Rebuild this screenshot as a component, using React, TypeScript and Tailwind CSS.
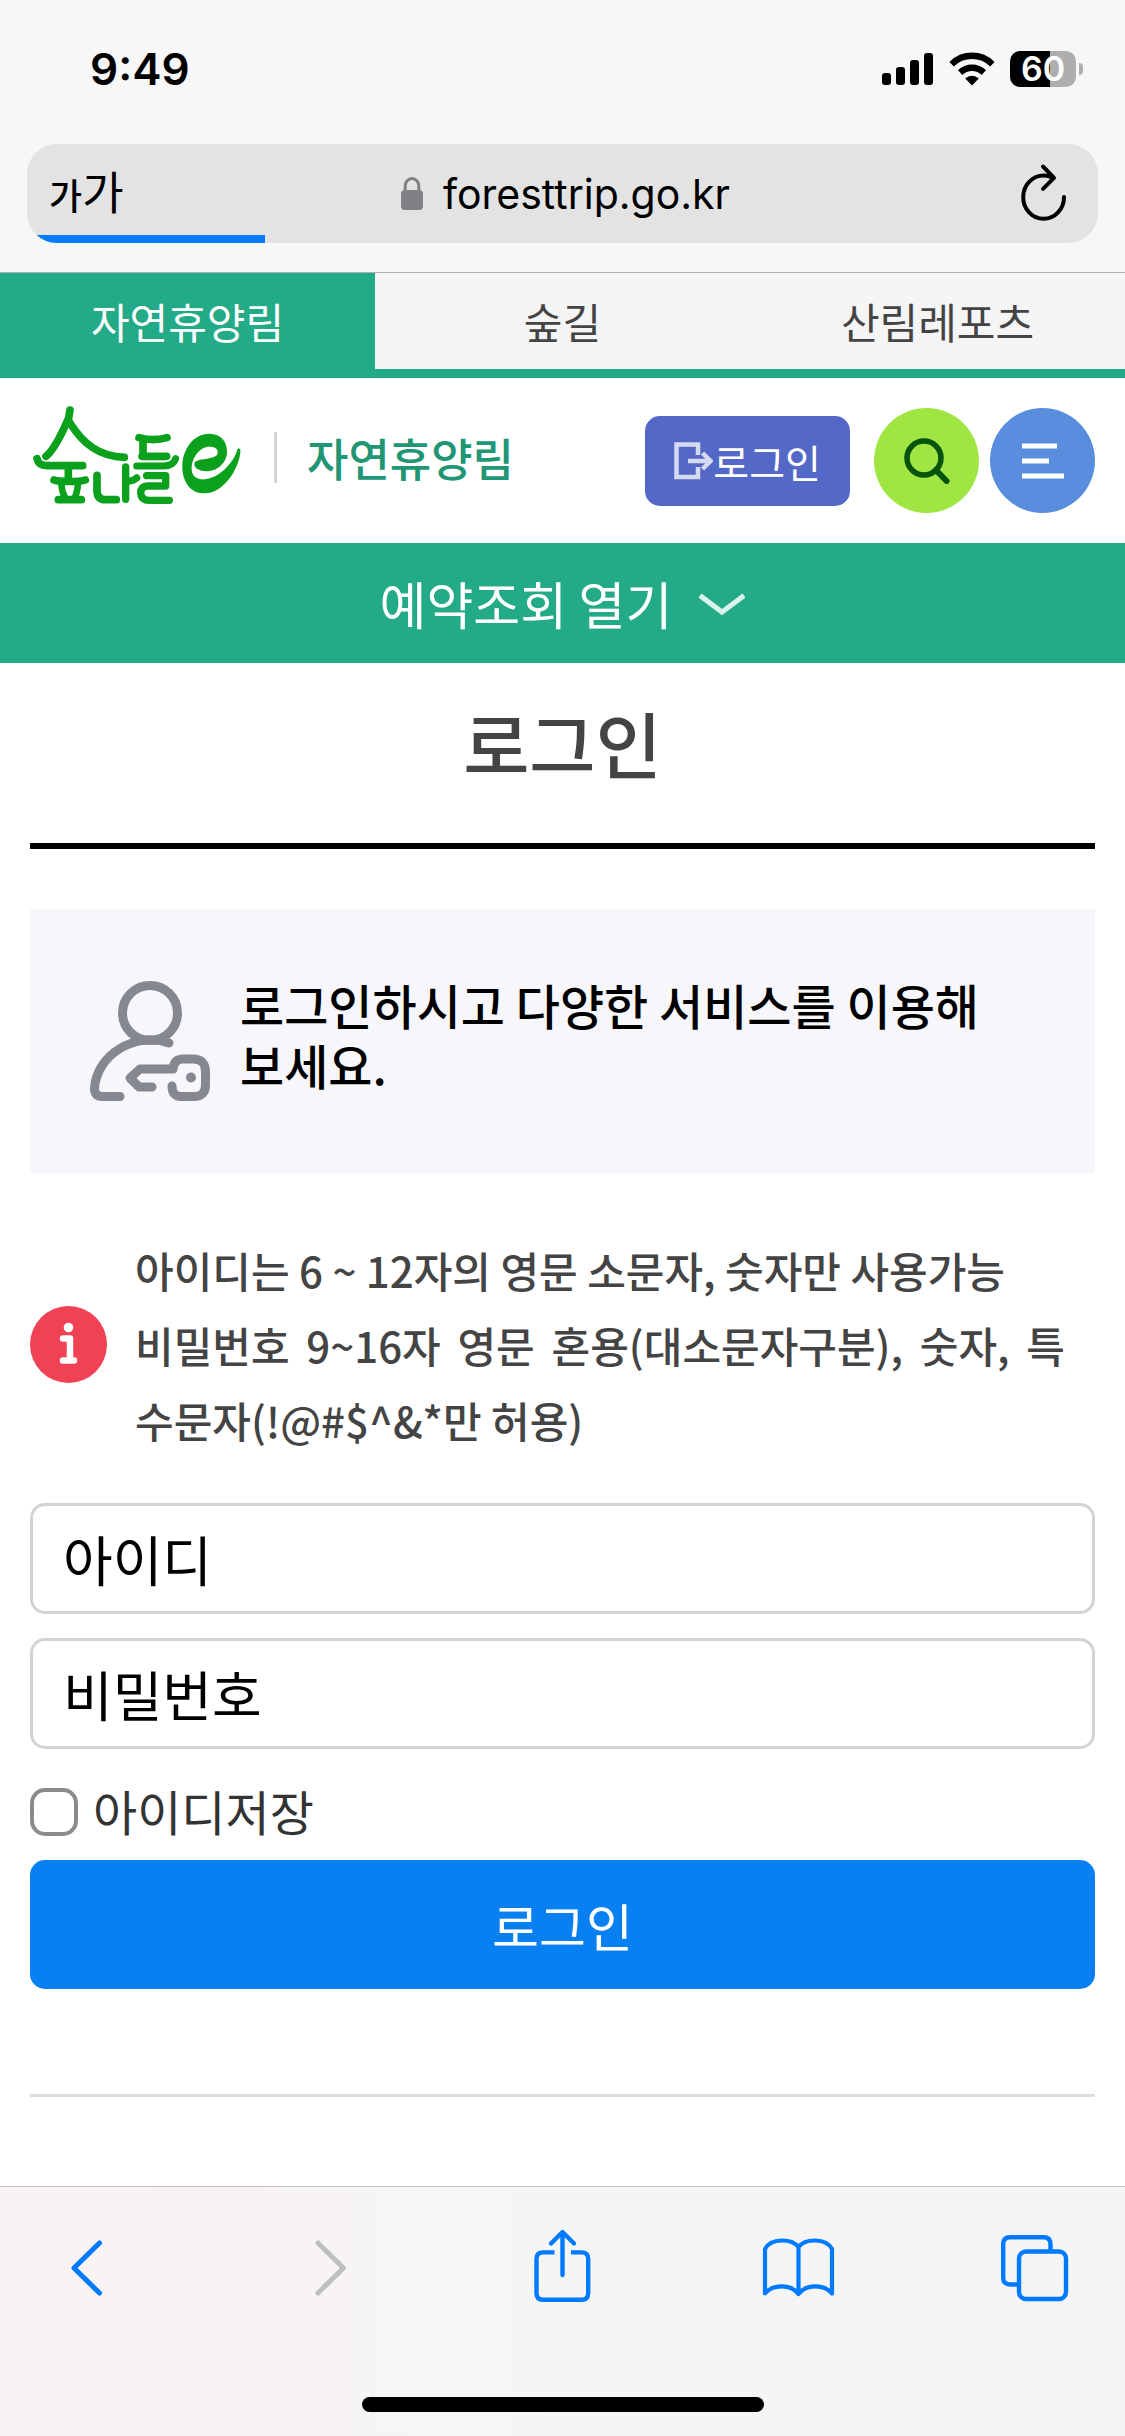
import React, { useState } from 'react';

const StatusBar: React.FC = () => (
    <div className="flex h-36 items-start justify-between pt-[42px] pl-[90px] pr-[42px]">
        <span className="text-[44px] leading-[54px] font-semibold text-black">9:49</span>
        <div className="flex h-[54px] items-center gap-[15px]">
            {/* Signal */}
            <svg width="52" height="34" viewBox="0 0 52 34" aria-hidden="true">
                <rect x="0" y="21" width="9" height="12" rx="3" />
                <rect x="14" y="15" width="9" height="18" rx="3" />
                <rect x="28" y="8" width="9" height="25" rx="3" />
                <rect x="42" y="1" width="9" height="32" rx="3" />
            </svg>
            {/* Wifi */}
            <svg width="46" height="34" viewBox="0 0 46 34" aria-hidden="true">
                <path d="M23 33.5 L16.2 26.6 A9.6 9.6 0 0 1 29.8 26.6 Z" />
                <path d="M11.2 20.6 A16.8 16.8 0 0 1 34.8 20.6" fill="none" stroke="#000" strokeWidth="6.4" />
                <path d="M2.6 12.2 A29 29 0 0 1 43.4 12.2" fill="none" stroke="#000" strokeWidth="6.4" />
            </svg>
            {/* Battery */}
            <div className="flex items-center gap-[3px]">
                <span className="flex h-9 w-[66px] items-center justify-center rounded-[10px] bg-linear-to-r from-black from-60% to-[#aeaeae] to-60% text-[34px] leading-9 font-semibold text-white">
                    60
                </span>
                <span className="h-3 w-1 rounded-r-full bg-[#aeaeae]" />
            </div>
        </div>
    </div>
);

const AddressBar: React.FC = () => (
    <div className="border-b border-[#b0b0b0] px-[27px] pb-[29px]">
        <div className="relative flex h-[99px] items-center overflow-hidden rounded-[30px] bg-[#e3e3e3]">
            <div className="flex flex-1 pr-[15px] pl-[22px]">
                <button type="button" className="flex items-baseline leading-none text-black">
                    <span className="text-[36px] font-medium">가</span>
                    <span className="text-[45px]">가</span>
                </button>
            </div>
            <button type="button" className="flex items-center gap-5 text-[41px] leading-[54px] text-black">
                <svg width="22" height="33" viewBox="0 0 22 33" aria-hidden="true">
                    <rect x="0" y="13" width="22" height="20" rx="4" fill="#808085" />
                    <path d="M4.2 15 V9 A6.8 7.4 0 0 1 17.8 9 V15" fill="none" stroke="#808085" strokeWidth="3" />
                </svg>
                foresttrip.go.kr
            </button>
            <div className="flex flex-1 justify-end pr-[31px]">
                <button type="button" aria-label="새로고침">
                    <svg width="46" height="62" viewBox="0 0 46 62" fill="none" stroke="#000" strokeWidth="4" strokeLinecap="round" strokeLinejoin="round" aria-hidden="true">
                        <path d="M31 14.5 C28 13.2 26 12.6 23 12.6 A20.4 21.6 0 1 0 43 34" />
                        <path d="M22 3.5 L33 14.8 L22 25.8" />
                    </svg>
                </button>
            </div>
            <div className="absolute bottom-0 left-0 h-2 w-[238px] bg-[#007aff]" />
        </div>
    </div>
);

const TABS = ['자연휴양림', '숲길', '산림레포츠'];

const SiteTabs: React.FC = () => {
    const [active, setActive] = useState(0);

    return (
        <nav className="grid grid-cols-3 border-b-9 border-[#23aa87] bg-[#f5f5f5]">
            {TABS.map((tab, i) => (
                <button
                    key={tab}
                    type="button"
                    onClick={() => setActive(i)}
                    className={
                        i === active
                            ? 'h-24 bg-[#23aa87] text-[42px] leading-[60px] text-white'
                            : 'h-24 text-[42px] leading-[60px] text-[#444]'
                    }
                >
                    {tab}
                </button>
            ))}
        </nav>
    );
};

const Logo: React.FC = () => (
    <svg width="208" height="106" viewBox="39 27 624 318" fill="none" stroke="#0ba11d" strokeWidth="23" strokeLinecap="round" strokeLinejoin="round" role="img" aria-label="숲나들e">
        <path d="M150 42 L146 66 C134 94 104 160 78 181" />
        <path d="M148 78 C190 146 240 182 313 184" />
        <path d="M51 188 Q56 209 80 209 H188" />
        <path d="M145 212 V246" />
        <path d="M102 252 C115 258 180 258 196 252" />
        <path d="M124 262 Q126 290 136 306 M174 262 Q172 290 164 306" strokeWidth="20" />
        <path d="M115 311 H184" />
        <path d="M231 238 V285 Q232 311 256 311 H289" />
        <path d="M317 213 V310 M322 256 Q342 254 350 246" strokeWidth="22" />
        <path d="M357 125 Q400 137 441 125 M369 132 V178 M366 181 H440" />
        <path d="M350 210 H430 Q460 210 467 188" strokeWidth="21" />
        <path d="M380 239 H437 V270 H382 Q362 271 362 292 Q364 313 388 313 H448" strokeWidth="22" />
        <path
            stroke="none"
            fill="#0ba11d"
            d="M661 160 C664 200 620 292 552 292 C510 292 487 255 487 212 C487 160 520 113 568 113 C605 113 621 138 621 167 C621 202 590 226 558 226 C540 226 523 217 523 205 C523 190 545 192 570 186 C588 182 595 176 593 166 C591 156 581 152 568 152 C540 152 514 185 515 220 C516 245 535 252 555 250 C600 246 645 195 652 160 C654 157 659 157 661 160 Z"
        />
    </svg>
);

const SiteHeader: React.FC = () => (
    <header className="flex h-[165px] items-center justify-between bg-white pr-[30px] pl-[33px]">
        <div className="flex items-center pb-1.5">
            <a href="#home">
                <Logo />
            </a>
            <span className="ml-[33px] h-[51px] w-[3px] bg-[#d4d4d4]" />
            <a href="#forest" className="ml-[30px] text-[45px] leading-[60px] font-medium text-[#219674]">
                자연휴양림
            </a>
        </div>
        <div className="flex items-center">
            <a href="#login" className="flex h-[90px] items-center rounded-[15px] bg-[#5468c7] px-[29px] text-[39px] leading-[54px] text-white">
                <svg width="39" height="38" viewBox="0 0 39 38" fill="none" stroke="#d6daf1" strokeWidth="4.5" aria-hidden="true">
                    <path d="M24 13 V2.5 H2.5 V35 H24 V25" />
                    <path d="M14 19 H36 M28.5 11 L36.5 19 L28.5 27" />
                </svg>
                로그인
            </a>
            <button type="button" aria-label="검색" className="ml-6 flex size-[105px] items-center justify-center rounded-full bg-[#a0e642]">
                <svg width="46" height="46" viewBox="0 0 46 46" fill="none" stroke="#07520d" aria-hidden="true">
                    <circle cx="20" cy="20" r="17" strokeWidth="5.5" />
                    <path d="M32 32 L42.5 43" strokeWidth="6" strokeLinecap="round" />
                </svg>
            </button>
            <button type="button" aria-label="메뉴" className="ml-[11px] flex size-[105px] items-center justify-center rounded-full bg-[#598ede]">
                <svg width="42" height="36" viewBox="0 0 42 36" fill="none" stroke="#fff" strokeWidth="5" aria-hidden="true">
                    <path d="M0 3 H35 M0 18 H27 M0 33 H42" />
                </svg>
            </button>
        </div>
    </header>
);

const LoginForm: React.FC = () => {
    const [userId, setUserId] = useState('');
    const [password, setPassword] = useState('');
    const [saveId, setSaveId] = useState(false);

    return (
        <form className="mt-[46px] flex flex-col" onSubmit={(e) => e.preventDefault()}>
            <input
                type="text"
                aria-label="아이디"
                placeholder="아이디"
                value={userId}
                onChange={(e) => setUserId(e.target.value)}
                className="h-[111px] rounded-[15px] border-3 border-[#d3d3d3] px-[30px] text-[54px] text-black placeholder:text-black"
            />
            <input
                type="password"
                aria-label="비밀번호"
                placeholder="비밀번호"
                value={password}
                onChange={(e) => setPassword(e.target.value)}
                className="mt-6 h-[111px] rounded-[15px] border-3 border-[#d3d3d3] px-[30px] text-[54px] text-black placeholder:text-black"
            />
            <div className="mt-[39px] flex h-12 items-center gap-[15px]">
                <input
                    id="save-id"
                    type="checkbox"
                    checked={saveId}
                    onChange={(e) => setSaveId(e.target.checked)}
                    className="size-12 appearance-none rounded-[15px] border-4 border-[#8a8a8f] bg-white checked:bg-[#0880f2]"
                />
                <label htmlFor="save-id" className="pb-1 text-[48px] leading-[48px] text-[#333]">
                    아이디저장
                </label>
            </div>
            <button type="submit" className="mt-6 h-[129px] rounded-[15px] bg-[#0880f2] text-[51px] leading-[60px] text-white">
                로그인
            </button>
        </form>
    );
};

const Toolbar: React.FC = () => (
    <footer className="mt-auto flex flex-col items-center border-t border-[#bebebe] bg-linear-to-r from-[#faf3f3] via-[#f6f5f5] to-[#f6f5f5] pb-6">
        <div className="flex w-full justify-between px-[42px] pt-[36px]">
            <button type="button" aria-label="뒤로">
                <svg width="90" height="90" viewBox="0 0 90 90" fill="none" stroke="#007aff" strokeWidth="5" strokeLinecap="round" strokeLinejoin="round" aria-hidden="true">
                    <path d="M57.5 20 L32 45 L57.5 70" />
                </svg>
            </button>
            <button type="button" aria-label="앞으로" disabled>
                <svg width="90" height="90" viewBox="0 0 90 90" fill="none" stroke="#bfbfbf" strokeWidth="5" strokeLinecap="round" strokeLinejoin="round" aria-hidden="true">
                    <path d="M38 20 L63.5 45 L38 70" />
                </svg>
            </button>
            <button type="button" aria-label="공유">
                <svg width="90" height="90" viewBox="0 0 90 90" fill="none" stroke="#007aff" strokeWidth="4.4" strokeLinejoin="round" aria-hidden="true">
                    <path d="M36.5 29.4 H25 Q18.5 29.4 18.5 36 V70 Q18.5 76.8 25 76.8 H63.5 Q70.2 76.8 70.2 70 V36 Q70.2 29.4 63.5 29.4 H53" />
                    <path d="M44.5 9.5 V52 M33 20.5 L44.5 9 L56 20.5" strokeLinecap="round" />
                </svg>
            </button>
            <button type="button" aria-label="책갈피">
                <svg width="90" height="90" viewBox="0 0 90 90" fill="none" stroke="#007aff" strokeWidth="4.2" strokeLinecap="round" strokeLinejoin="round" aria-hidden="true">
                    <path d="M43.5 24 C37 15.5 16 14.5 10 26 V70.5 C18 61 36 61 43.5 71 C51 61 69 61 77 70.5 V26 C71 14.5 50 15.5 43.5 24 Z M43.5 24 V71" />
                </svg>
            </button>
            <button type="button" aria-label="탭">
                <svg width="90" height="90" viewBox="0 0 90 90" fill="none" stroke="#007aff" strokeWidth="4.4" aria-hidden="true">
                    <rect x="26" y="28.5" width="47" height="47.5" rx="7" />
                    <path d="M57.5 28 V21 Q57.5 14.2 50.5 14.2 H17 Q10.2 14.2 10.2 21 V54.5 Q10.2 61.5 17 61.5 H25" />
                </svg>
            </button>
        </div>
        <div className="mt-[84px] h-[15px] w-[402px] rounded-full bg-black" />
    </footer>
);

export default function App() {
    return (
        <div className="flex min-h-screen flex-col bg-white font-['Inter','Noto_Sans_CJK_KR',sans-serif]">
            <div className="bg-[#f7f7f7]">
                <StatusBar />
                <AddressBar />
            </div>

            <div className="flex flex-col font-['Noto_Sans_CJK_KR',sans-serif]">
                <SiteTabs />
                <SiteHeader />

                <button type="button" className="flex h-[120px] items-center justify-center gap-[27px] bg-[#23aa87] text-[51px] leading-[60px] text-white">
                    예약조회 열기
                    <svg width="46" height="26" viewBox="0 -4 46 26" fill="none" stroke="#dcf2ec" strokeWidth="5" aria-hidden="true">
                        <path d="M1 1.5 L23 18 L45 1.5" />
                    </svg>
                </button>

                <main className="px-[30px]">
                    <h1 className="border-b-6 border-black pt-6 pb-[46px] text-center text-[72px] leading-[110px] font-medium text-[#444]">
                        로그인
                    </h1>

                    <div className="mt-[60px] flex items-start gap-[30px] bg-[#f6f6fb] px-[60px] pt-[65px] pb-[72px]">
                        <svg className="mt-[7px] shrink-0" width="120" height="120" viewBox="0 0 120 120" fill="none" stroke="#858791" strokeWidth="9" strokeLinecap="round" strokeLinejoin="round" aria-hidden="true">
                            <circle cx="60" cy="32" r="27.5" />
                            <path d="M79 62 C45 50 6 74 4.5 108 Q5 115.5 12 115.5 H30" />
                            <path d="M82 105 Q82 115.5 91 115.5 H104 Q115.5 115.5 115.5 104 V91 Q115.5 78 103 78 H93 Q84 78 83 88 H50 L40 97 L49 106 H62" />
                            <circle cx="101" cy="96.5" r="5" fill="#858791" stroke="none" />
                        </svg>
                        <p className="text-[48px] leading-[60px] font-medium break-keep text-black">
                            로그인하시고 다양한 서비스를 이용해 보세요.
                        </p>
                    </div>

                    <div className="mt-[59px] flex items-center gap-7 pr-[30px]">
                        <svg className="shrink-0" width="77" height="77" viewBox="0 0 77 77" aria-hidden="true">
                            <circle cx="38.5" cy="38.5" r="38.5" fill="#f04155" />
                            <circle cx="38.5" cy="21.5" r="4.8" fill="#fff" />
                            <path d="M33 32.5 H40 V54 M33 54.5 H44" fill="none" stroke="#fff" strokeWidth="6.5" strokeLinecap="round" strokeLinejoin="round" />
                        </svg>
                        <p className="text-justify text-[42px] leading-[75px] font-medium text-[#444]">
                            아이디는 6 ~ 12자의 영문 소문자, 숫자만 사용가능
                            <br />
                            비밀번호 9~16자 영문 혼용(대소문자구분), 숫자, 특수문자(!@#$^&amp;*만 허용)
                        </p>
                    </div>

                    <LoginForm />

                    <hr className="mt-[105px] border-t-3 border-[#ddd]" />
                </main>
            </div>

            <Toolbar />
        </div>
    );
}
